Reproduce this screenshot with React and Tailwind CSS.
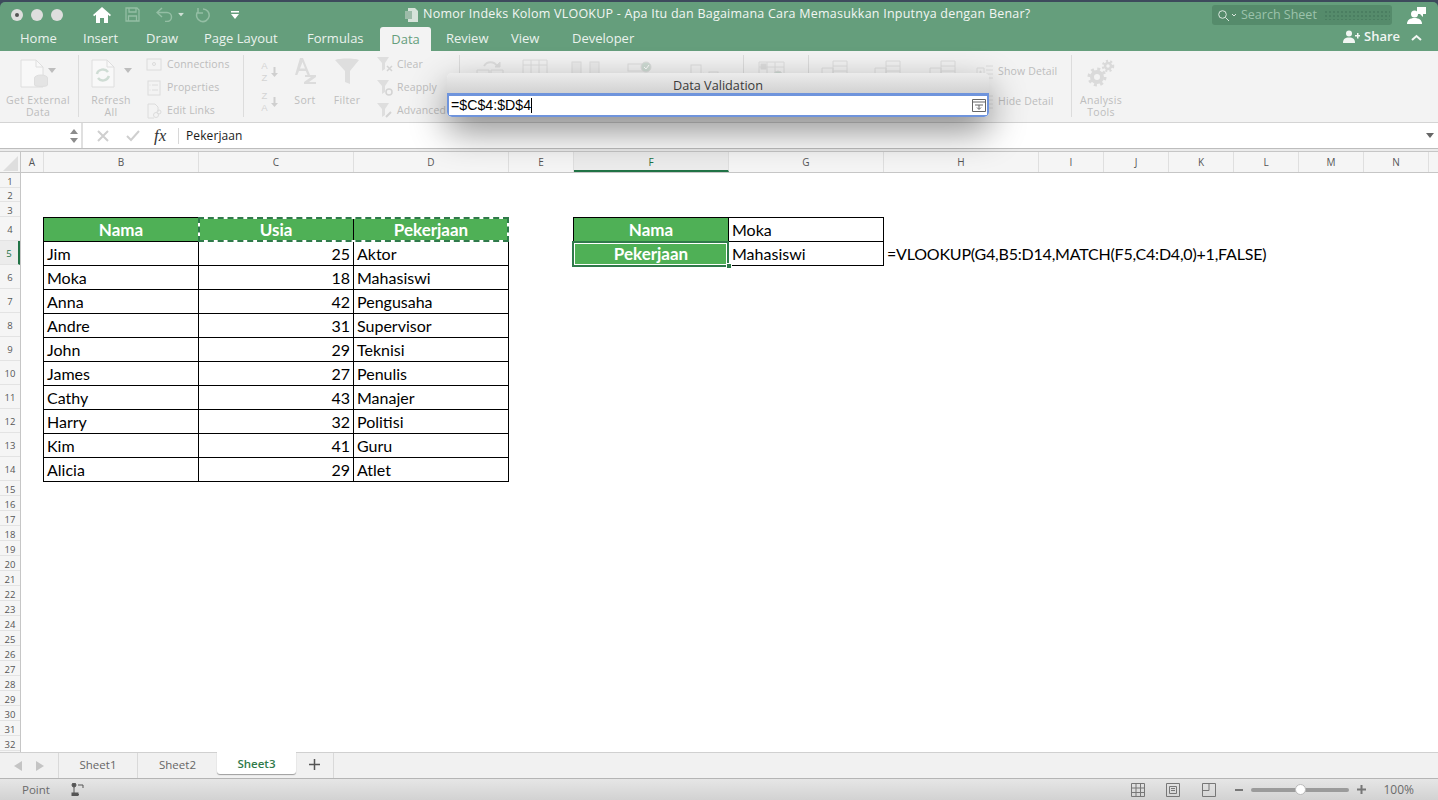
import React from 'react'

const uiFont = "font-['Open_Sans','Liberation_Sans',sans-serif]"
const cellFont = "font-['Lato','Open_Sans',sans-serif]"

const tabs = [
  { name: 'Home', w: 'w-[63px] pl-[20px]' },
  { name: 'Insert', w: 'w-[63px] pl-[20px]' },
  { name: 'Draw', w: 'w-[58px] pl-[20px]' },
  { name: 'Page Layout', w: 'w-[103px] pl-[20px]' },
  { name: 'Formulas', w: 'w-[93px] pl-[20px]' },
]

const columns = [
  { name: 'A', w: 'w-[23px]' },
  { name: 'B', w: 'w-[155px]' },
  { name: 'C', w: 'w-[155px]' },
  { name: 'D', w: 'w-[155px]' },
  { name: 'E', w: 'w-[65px]' },
  { name: 'F', w: 'w-[155px]', active: true },
  { name: 'G', w: 'w-[155px]' },
  { name: 'H', w: 'w-[155px]' },
  { name: 'I', w: 'w-[65px]' },
  { name: 'J', w: 'w-[65px]' },
  { name: 'K', w: 'w-[65px]' },
  { name: 'L', w: 'w-[65px]' },
  { name: 'M', w: 'w-[65px]' },
  { name: 'N', w: 'w-[65px]' },
]

const people = [
  ['Jim', 25, 'Aktor'],
  ['Moka', 18, 'Mahasiswi'],
  ['Anna', 42, 'Pengusaha'],
  ['Andre', 31, 'Supervisor'],
  ['John', 29, 'Teknisi'],
  ['James', 27, 'Penulis'],
  ['Cathy', 43, 'Manajer'],
  ['Harry', 32, 'Politisi'],
  ['Kim', 41, 'Guru'],
  ['Alicia', 29, 'Atlet'],
]

const rowNumbers = Array.from({ length: 32 }, (_, i) => i + 1)

function Caret({ className = '' }) {
  return (
    <svg width="8" height="5" viewBox="0 0 8 5" className={`shrink-0 ${className}`}>
      <path d="M0 0h8L4 5z" fill="currentColor" />
    </svg>
  )
}

function DocIcon({ children }) {
  return (
    <svg width="34" height="30" viewBox="0 0 34 30" fill="none" stroke="#dedede" strokeWidth="1">
      <path d="M1 1h15l7 7v20H1z" fill="#f8f8f8" />
      <path d="M16 1v7h7" />
      {children}
    </svg>
  )
}

function SmallIcon({ children }) {
  return (
    <svg width="16" height="16" viewBox="0 0 16 16" fill="none" stroke="#dcdcdc" strokeWidth="1" className="shrink-0">
      {children}
    </svg>
  )
}

function FunnelSmall({ mark }) {
  return (
    <svg width="17" height="17" viewBox="0 0 17 17" fill="#dedede" className="shrink-0">
      <path d="M1 1h12L9 7v6l-3 2V7z" />
      {mark}
    </svg>
  )
}

function SmallRow({ icon, label, gap = 'gap-[5px]' }) {
  return (
    <div className={`flex items-center h-[23px] ${gap}`}>
      {icon}
      <span className="text-[10.5px] tracking-[0.15px] text-[#bdbdbd] whitespace-nowrap">{label}</span>
    </div>
  )
}

function Separator({ ml = '', mr = '' }) {
  return <div className={`w-px h-[62px] bg-[#dcdcdc] shrink-0 ${ml} ${mr}`} />
}

function BigLabel({ children }) {
  return <div className="text-[10.5px] leading-[12px] tracking-[0.3px] text-[#bdbdbd] text-center whitespace-nowrap">{children}</div>
}

function SortStack({ top, bottom }) {
  return (
    <div className="flex items-center h-[24px]">
      <div className="w-[9px] flex flex-col items-center font-['Liberation_Sans',sans-serif] text-[9.500px] leading-[12px] text-[#d4d4d4]">
        <span>{top}</span>
        <span>{bottom}</span>
      </div>
      <svg width="7" height="10" viewBox="0 0 7 10" fill="#cfcfcf" className="ml-[2px]">
        <path d="M2.500 0h2v6H7l-3.500 4L0 6h2.500z" />
      </svg>
    </div>
  )
}

function GroupIcon() {
  return (
    <svg width="27" height="18" viewBox="0 0 27 18" fill="none" stroke="#dedede" className="shrink-0">
      <path d="M1 8h11v10H1zM12 1h14v17H12zM12 6h14M12 11h14" />
    </svg>
  )
}

function Ribbon() {
  return (
    <div className={`h-[71px] bg-[#f3f3f3] flex pt-[4px] overflow-hidden ${uiFont}`}>
      {/* Get External Data */}
      <div className="w-[64px] ml-[6px] shrink-0 flex flex-col items-center">
        <div className="flex items-start h-[39px] pt-[4px] text-[#bdbdbd]">
          <DocIcon>
            <ellipse cx="21" cy="19" rx="6.500" ry="3" fill="#e4e4e4" />
            <path d="M14.500 19v7c0 2 13 2 13 0v-7" fill="#e4e4e4" />
          </DocIcon>
          <Caret className="mt-[9px] -ml-[6px]" />
        </div>
        <BigLabel>Get External</BigLabel>
        <BigLabel>Data</BigLabel>
      </div>
      <Separator ml="ml-[8px]" mr="mr-[12px]" />
      {/* Refresh */}
      <div className="w-[40px] shrink-0 flex flex-col items-center">
        <div className="flex items-start h-[39px] pt-[4px] text-[#bdbdbd]">
          <DocIcon>
            <path d="M6 15c1-5 8-6 11-2M18 17c-2 5-8 6-11 2" stroke="#cfdcd4" strokeWidth="2.500" />
          </DocIcon>
          <Caret className="mt-[9px] -ml-[1px]" />
        </div>
        <BigLabel>Refresh</BigLabel>
        <BigLabel>All</BigLabel>
      </div>
      <div className="ml-[15px] w-[97px] shrink-0 flex flex-col -mt-[2px]">
        <SmallRow label="Connections" icon={<SmallIcon><rect x="1" y="2" width="14" height="11" /><circle cx="8" cy="7" r="1.500" /></SmallIcon>} />
        <SmallRow label="Properties" icon={<SmallIcon><rect x="2" y="1" width="12" height="14" /><path d="M6 5h6M6 10h6M3.500 5h1M3.500 10h1" /></SmallIcon>} />
        <SmallRow label="Edit Links" icon={<SmallIcon><path d="M2 1h7l3 3v5M2 1v14h6" /><circle cx="10" cy="12" r="2.500" /><circle cx="13" cy="9" r="2" /></SmallIcon>} />
      </div>
      <Separator mr="mr-[16px]" />
      {/* Sort and filter */}
      <div className="w-[18px] shrink-0 flex flex-col gap-[6px] pt-[5px]">
        <SortStack top="A" bottom="Z" />
        <SortStack top="Z" bottom="A" />
      </div>
      <div className="w-[24px] ml-[15px] shrink-0 flex flex-col items-center">
        <div className="h-[39px] pt-[2px]">
          <svg width="24" height="27" viewBox="0 0 24 27" fill="#dcdcdc">
            <path d="M7 1h3l7 17h-2.500l-1.700-4H6L4.300 18H2zM7 11.500h5L9.500 5z" />
            <path d="M12 18h11v2l-7 5h7v2H11v-2l7-5h-6z" />
          </svg>
        </div>
        <BigLabel>Sort</BigLabel>
      </div>
      <div className="w-[24px] ml-[18px] shrink-0 flex flex-col items-center">
        <div className="h-[39px] pt-[3px]">
          <svg width="24" height="27" viewBox="0 0 24 27" fill="#dedede">
            <path d="M0 2c4-2 20-2 24 0L15 13v13l-5-2V13z" />
          </svg>
        </div>
        <BigLabel>Filter</BigLabel>
      </div>
      <div className="ml-[17px] w-[83px] shrink-0 flex flex-col -mt-[2px]">
        <SmallRow gap="gap-[4px]" label="Clear" icon={<FunnelSmall mark={<path d="M11 10l5 5M16 10l-5 5" stroke="#d4d4d4" strokeWidth="1.500" />} />} />
        <SmallRow gap="gap-[4px]" label="Reapply" icon={<FunnelSmall mark={<circle cx="13" cy="13" r="3" fill="none" stroke="#d4d4d4" strokeWidth="1.500" />} />} />
        <SmallRow gap="gap-[4px]" label="Advanced" icon={<FunnelSmall mark={<path d="M10 15l5-5" stroke="#d4d4d4" strokeWidth="2" />} />} />
      </div>
      {/* Data tools, mostly under the dialog */}
      <Separator mr="mr-[16px]" />
      <div className="flex items-start shrink-0 pt-[4px] text-[#bdbdbd]">
        <svg width="31" height="18" viewBox="0 0 31 18" fill="none" stroke="#dedede" className="shrink-0">
          <path d="M8 7c3-5 10-5 13 0" strokeWidth="2" />
          <path d="M19 8l5 0 0-5z" fill="#dedede" />
          <path d="M1 11h12v7H1zM15 11h12v7H15z" />
        </svg>
        <svg width="29" height="18" viewBox="0 0 29 18" fill="none" stroke="#dedede" className="shrink-0 ml-[15px]">
          <path d="M1 1h24v16H1zM1 6h24M9 1v16M17 1v16" />
          <path d="M22 17l6-2v3h-6z" fill="#dedede" />
        </svg>
        <svg width="29" height="18" viewBox="0 0 29 18" fill="none" stroke="#dedede" className="shrink-0 ml-[20px]">
          <rect x="1" y="3" width="9" height="15" fill="#ececec" />
          <rect x="19" y="3" width="9" height="15" fill="#ececec" />
          <path d="M12 15l3 2-3 1z" fill="#cfdcd4" />
        </svg>
        <svg width="25" height="18" viewBox="0 0 25 18" fill="none" stroke="#dedede" className="shrink-0 ml-[27px]">
          <rect x="1" y="5" width="15" height="7" />
          <circle cx="19" cy="8" r="5" fill="#cfdcd4" />
          <path d="M17 8l2 2 3-4" stroke="#fff" />
        </svg>
        <Caret className="ml-[7px] mt-[15px]" />
        <svg width="29" height="18" viewBox="0 0 29 18" fill="none" stroke="#dedede" className="shrink-0 ml-[23px]">
          <rect x="1" y="6" width="10" height="12" />
          <rect x="19" y="13" width="9" height="5" />
          <path d="M13 14l3 2-3 2z" fill="#cfdcd4" />
        </svg>
      </div>
      <Separator ml="ml-[24px]" mr="mr-[14px]" />
      <div className="flex items-start shrink-0 pt-[4px] text-[#bdbdbd]">
        <svg width="27" height="18" viewBox="0 0 27 18" fill="none" stroke="#dedede" className="shrink-0">
          <path d="M1 3h25v12H1zM1 8h25M9 3v12M17 3v12" />
          <rect x="3" y="5" width="5" height="5" fill="#dedede" />
          <circle cx="20" cy="16" r="4" fill="#cfdcd4" />
        </svg>
        <Caret className="ml-[3px] mt-[15px]" />
      </div>
      <Separator ml="ml-[12px]" mr="mr-[12px]" />
      <div className="flex items-start shrink-0 pt-[5px] text-[#bdbdbd]">
        <GroupIcon />
        <Caret className="ml-[6px] mt-[14px]" />
        <div className="ml-[12px]"><GroupIcon /></div>
        <Caret className="ml-[6px] mt-[14px]" />
        <div className="ml-[14px]"><GroupIcon /></div>
      </div>
      <div className="w-[95px] shrink-0 ml-[20px] flex flex-col gap-[7px] pt-[5px]">
        <SmallRow gap="gap-[5px]" label="Show Detail" icon={<svg width="17" height="16" viewBox="0 0 17 16" fill="none" stroke="#dedede" className="shrink-0"><path d="M1 4h7v8H1zM3 8h3M4.500 6.500v3M10 2h7M10 6h7M10 10h7M10 14h7" /></svg>} />
        <SmallRow gap="gap-[5px]" label="Hide Detail" icon={<svg width="17" height="16" viewBox="0 0 17 16" fill="none" stroke="#dedede" className="shrink-0"><path d="M1 4h7v8H1zM3 8h3M10 2h7M10 6h7M10 10h7M10 14h7" /></svg>} />
      </div>
      <Separator />
      {/* Analysis tools */}
      <div className="w-[58px] shrink-0 flex flex-col items-center">
        <div className="h-[39px] pt-[4px]">
          <svg width="28" height="28" viewBox="0 0 28 28" fill="none" stroke="#dadada">
            <circle cx="10" cy="18" r="5" strokeWidth="4" />
            <circle cx="10" cy="18" r="8" strokeWidth="3" strokeDasharray="3 3.280" />
            <circle cx="21" cy="7" r="3" strokeWidth="2.500" />
            <circle cx="21" cy="7" r="5" strokeWidth="2.500" strokeDasharray="2 2.190" />
          </svg>
        </div>
        <BigLabel>Analysis</BigLabel>
        <BigLabel>Tools</BigLabel>
      </div>
    </div>
  )
}

function TitleBar() {
  return (
    <div className={`bg-[#659e7c] h-[49px] shrink-0 flex flex-col rounded-t-[5px] ${uiFont}`}>
      <div className="h-[25px] flex items-center relative">
        <div className="flex items-center gap-[8px] pl-[11px]">
          <div className="w-[12px] h-[12px] rounded-full bg-[#dedede] flex items-center justify-center">
            <div className="w-[4px] h-[4px] rounded-full bg-[#555]" />
          </div>
          <div className="w-[12px] h-[12px] rounded-full bg-[#dedede]" />
          <div className="w-[12px] h-[12px] rounded-full bg-[#dedede]" />
        </div>
        <svg width="18" height="16" viewBox="0 0 18 16" className="ml-[30px]">
          <path d="M9 0L0 8l1.200 1.300L3 7.700V16h4v-5h4v5h4V7.700l1.800 1.600L18 8z" fill="#fff" />
        </svg>
        <svg width="15" height="15" viewBox="0 0 15 15" fill="none" stroke="#94bea4" strokeWidth="1.300" className="ml-[14px]">
          <path d="M1 1h11l2 2v11H1zM4 1v4h7V1M3.500 14V9h8v5" />
        </svg>
        <svg width="17" height="15" viewBox="0 0 17 15" fill="none" stroke="#94bea4" strokeWidth="1.500" className="ml-[16px]">
          <path d="M6 1L1 5.500 6 10M1 5.500h10a4.500 4.500 0 0 1 0 9H9" />
        </svg>
        <Caret className="ml-[4px] text-[#cfe0d5] scale-75" />
        <svg width="16" height="16" viewBox="0 0 16 16" fill="none" stroke="#94bea4" strokeWidth="1.500" className="ml-[9px]">
          <path d="M9 2a6.300 6.300 0 1 1-5.600 3.200M4 1v5h5" />
        </svg>
        <svg width="8" height="8" viewBox="0 0 8 8" fill="#fff" className="ml-[21px]">
          <path d="M0 0h8v1.500H0zM0 3h8L4 8z" />
        </svg>
        <svg width="14" height="14" viewBox="0 0 14 14" className="ml-[166px]">
          <path d="M3 0h7l3 3v11H3z" fill="#d6e3da" />
          <rect x="0" y="3" width="7" height="8" fill="#9dbca9" />
        </svg>
        <span className="ml-[4px] text-[12.500px] tracking-[0.23px] text-[#f2f6f3] whitespace-nowrap">Nomor Indeks Kolom VLOOKUP - Apa Itu dan Bagaimana Cara Memasukkan Inputnya dengan Benar?</span>
        <div className="absolute left-[1212px] top-[3px] w-[180px] h-[20px] rounded-[3px] bg-[#558b6b] flex items-center pl-[6px] gap-[2px]">
          <svg width="11" height="11" viewBox="0 0 11 11" fill="none" stroke="#dce8e0" strokeWidth="1"><circle cx="4.500" cy="4.500" r="3.800" /><path d="M7.500 7.500L11 11" /></svg>
          <svg width="6" height="4" viewBox="0 0 6 4" fill="none" stroke="#dce8e0"><path d="M1 1l2 2 2-2" /></svg>
          <span className="ml-[2px] text-[12.500px] text-[#9cc3ab]">Search Sheet</span>
          <div className="ml-[5px] mr-[2px] flex-1 h-[10px] bg-[radial-gradient(#4a7d60_0.7px,transparent_0.8px)] bg-[length:4px_4px]" />
        </div>
        <svg width="19" height="19" viewBox="0 0 19 19" fill="#fff" className="absolute left-[1407px] top-[4px]">
          <path d="M10 1h9v7h-3v3l-3-3h-3z" />
          <circle cx="7.500" cy="8" r="3.500" />
          <path d="M0 18c0-4 3-6 7.500-6s7.500 2 7.500 6z" />
        </svg>
      </div>
      <div className="flex h-[24px] relative">
        {tabs.map((t) => (
          <div key={t.name} className={`${t.w} text-[13px] leading-[22px] font-medium text-[#eaf2ed] whitespace-nowrap`}>{t.name}</div>
        ))}
        <div className="w-[51px] h-[24px] bg-[#f3f3f3] rounded-t-[3px] text-center text-[13px] leading-[24px] font-medium text-[#659e7c]">Data</div>
        <div className="w-[65px] pl-[15px] text-[13px] leading-[22px] font-medium text-[#eaf2ed]">Review</div>
        <div className="w-[52px] pl-[15px] text-[13px] leading-[22px] font-medium text-[#eaf2ed]">View</div>
        <div className="pl-[24px] text-[13px] leading-[22px] font-medium text-[#eaf2ed]">Developer</div>
        <div className="absolute left-[1343px] top-0 flex items-center text-white">
          <svg width="17" height="13" viewBox="0 0 17 13" fill="#f2f6f3">
            <circle cx="6" cy="3.500" r="3" />
            <path d="M0 13c0-4 2-5.500 6-5.500S12 9 12 13zM12 5h2V3h1.500v2H17v1.500h-1.500v2H14v-2h-2z" />
          </svg>
          <span className="ml-[4px] text-[13px] font-semibold text-[#f2f6f3]">Share</span>
          <svg width="11" height="7" viewBox="0 0 11 7" fill="none" stroke="#f2f6f3" strokeWidth="2" className="ml-[11px] mt-[1px]"><path d="M1 6l4.500-4L10 6" /></svg>
        </div>
      </div>
    </div>
  )
}

function FormulaBar() {
  return (
    <div className={`h-[27px] bg-white border-t border-[#d4d4d4] border-b border-b-[#bdbdbd] flex items-center ${uiFont}`}>
      <div className="w-[83px] h-full border-r-2 border-[#e0e0e0] flex flex-col items-end justify-center gap-[4px] pr-[3px] text-[#8c8c8c]">
        <Caret className="rotate-180" />
        <Caret />
      </div>
      <svg width="12" height="12" viewBox="0 0 12 12" stroke="#cfcfcf" strokeWidth="2" className="ml-[14px]"><path d="M1 1l10 10M11 1L1 11" /></svg>
      <svg width="14" height="12" viewBox="0 0 14 12" fill="none" stroke="#cfcfcf" strokeWidth="2" className="ml-[17px]"><path d="M1 6l4 4 8-9" /></svg>
      <span className="ml-[14px] w-[24px] font-['Liberation_Serif',serif] italic text-[17px] text-[#333]">fx</span>
      <div className="w-px h-[16px] bg-[#d8d8d8]" />
      <span className="ml-[7px] text-[12px] tracking-[0.1px] text-[#1a1a1a]">Pekerjaan</span>
      <Caret className="ml-auto mr-[4px] text-[#666]" />
    </div>
  )
}

function ColumnHeader() {
  return (
    <div className={`h-[21px] flex bg-[#f5f5f5] border-b border-[#c6c6c6] text-[10px] leading-[20px] text-[#555] ${uiFont}`}>
      <div className="w-[21px] shrink-0 border-r border-[#c6c6c6] relative overflow-hidden">
        <svg width="20" height="20" viewBox="0 0 20 20" className="absolute left-0 top-0"><path d="M18 4v15H3z" fill="#dedede" /></svg>
      </div>
      {columns.map((c) => (
        <div
          key={c.name}
          className={`${c.w} shrink-0 text-center border-r border-[#dfdfdf] ${c.active ? 'bg-[#ececec] border-b-2 border-b-[#217346] text-[#217346]' : ''}`}
        >
          {c.name}
        </div>
      ))}
      <div className="flex-1" />
    </div>
  )
}

function RowHeaders() {
  return (
    <div className={`w-[21px] shrink-0 bg-[#f5f5f5] border-r border-[#c6c6c6] text-[9.500px] text-[#555] ${uiFont}`}>
      {rowNumbers.map((n) => {
        const tall = n >= 4 && n <= 14
        const active = n === 5
        return (
          <div
            key={n}
            className={`flex items-center justify-center pt-[4px] border-b border-[#e3e3e3] ${tall ? 'h-[24px]' : n <= 3 ? 'h-[14.670px]' : 'h-[15px]'} ${active ? 'bg-[#ececec] text-[#217346] border-r-2 border-r-[#217346]' : ''}`}
          >
            {n}
          </div>
        )
      })}
    </div>
  )
}

function Cell({ w, children, className = '' }) {
  return (
    <div className={`${w} h-[24px] shrink-0 border-black border-r border-b px-[3px] leading-[24px] whitespace-nowrap ${className}`}>
      {children}
    </div>
  )
}

const headCell = 'bg-[#4fb056] font-bold text-white text-center text-[17px]'

function Sheet() {
  return (
    <div className={`flex-1 bg-white overflow-hidden flex min-h-0 ${cellFont} text-[16px] text-black`}>
      <RowHeaders />
      <div className="pt-[44px] pl-[22px] flex-1">
        <div className="flex items-start">
          {/* Left table */}
          <div className="w-[466px] shrink-0 border-l border-t border-black">
            <div className="flex relative">
              <Cell w="w-[155px]" className={headCell}>Nama</Cell>
              <Cell w="w-[155px]" className={headCell}>Usia</Cell>
              <Cell w="w-[155px]" className={headCell}>Pekerjaan</Cell>
              <div className="absolute left-[154px] -top-px w-[311px] h-[25px] border-2 border-white" />
              <div className="absolute left-[154px] -top-px w-[311px] h-[25px] border-2 border-dashed border-[#2f7a4a]" />
            </div>
            {people.map((p) => (
              <div key={p[0]} className="flex">
                <Cell w="w-[155px]">{p[0]}</Cell>
                <Cell w="w-[155px]" className="text-right">{p[1]}</Cell>
                <Cell w="w-[155px]">{p[2]}</Cell>
              </div>
            ))}
          </div>
          {/* Lookup table */}
          <div className="ml-[64px] w-[311px] shrink-0 border-l border-t border-black">
            <div className="flex">
              <Cell w="w-[155px]" className={headCell}>Nama</Cell>
              <Cell w="w-[155px]">Moka</Cell>
            </div>
            <div className="flex relative">
              <Cell w="w-[155px]" className={headCell}>Pekerjaan</Cell>
              <Cell w="w-[155px]">Mahasiswi</Cell>
              <span className="pl-[3px] leading-[24px] whitespace-nowrap tracking-[-0.2px]">=VLOOKUP(G4,B5:D14,MATCH(F5,C4:D4,0)+1,FALSE)</span>
              <div className="absolute -left-[2px] -top-px w-[157px] h-[26px] border-2 border-[#2f7a4a]">
                <div className="w-full h-full border border-white" />
              </div>
              <div className="absolute left-[152px] top-[21px] w-[6px] h-[6px] bg-[#2f7a4a] border border-white" />
            </div>
          </div>
        </div>
      </div>
    </div>
  )
}

function SheetTabs() {
  return (
    <div className={`h-[26px] shrink-0 bg-[#f1f1f1] border-t border-[#d0d0d0] flex ${uiFont} text-[11.500px] text-[#666]`}>
      <div className="w-[59px] flex items-center justify-center gap-[14px] border-r border-[#d9d9d9] text-[#c4c4c4]">
        <svg width="8" height="10" viewBox="0 0 8 10" fill="currentColor"><path d="M8 0v10L0 5z" /></svg>
        <svg width="8" height="10" viewBox="0 0 8 10" fill="currentColor"><path d="M0 0v10l8-5z" /></svg>
      </div>
      <div className="w-[79px] text-center leading-[24px] border-r border-[#d9d9d9]">Sheet1</div>
      <div className="w-[79px] text-center leading-[24px]">Sheet2</div>
      <div className="w-[79px] h-[22px] -mt-px bg-white rounded-b-[3px] shadow-[0_1px_1px_rgba(0,0,0,0.35)] text-center leading-[24px] font-semibold text-[#2f7a4a]">Sheet3</div>
      <div className="w-[38px] flex items-center justify-center border-r border-[#d9d9d9] pb-[2px]">
        <svg width="11" height="11" viewBox="0 0 11 11" stroke="#555" strokeWidth="1.500"><path d="M5.500 0v11M0 5.500h11" /></svg>
      </div>
    </div>
  )
}

function StatusBar() {
  return (
    <div className={`h-[22px] shrink-0 border-t border-[#b5b5b5] bg-linear-to-b from-[#e6e6e6] to-[#d2d2d2] flex items-center ${uiFont} text-[11.500px] text-[#6b6b6b]`}>
      <span className="ml-[22px]">Point</span>
      <svg width="14" height="13" viewBox="0 0 14 13" fill="none" stroke="#555" className="ml-[21px]">
        <circle cx="3" cy="2" r="2" fill="#555" />
        <path d="M3 4v6M7 2h5v3M1 11.500h7" />
        <rect x="1" y="10" width="6" height="3" fill="#555" />
      </svg>
      <svg width="14" height="14" viewBox="0 0 14 14" fill="none" stroke="#777" className="ml-auto">
        <path d="M.5.5h13v13H.5zM.5 5h13M.5 9.500h13M5 .5v13M9.500 .5v13" />
      </svg>
      <svg width="14" height="14" viewBox="0 0 14 14" fill="none" stroke="#777" className="ml-[21px]">
        <path d="M.5.5h13v13H.5zM3.500 3.500h7v7h-7zM5 5.500h4M5 7.500h4" />
      </svg>
      <svg width="14" height="14" viewBox="0 0 14 14" fill="none" stroke="#777" className="ml-[22px]">
        <path d="M.5.5h13v13H.5zM7 .5v7H.5" />
      </svg>
      <div className="w-[8px] h-[2px] bg-[#777] ml-[19px]" />
      <div className="w-[98px] h-[4px] rounded-full bg-[#9b9b9b] ml-[8px] flex items-center relative">
        <div className="absolute left-[44px] -top-[3.500px] w-[11px] h-[11px] rounded-full bg-white border border-[#bbb]" />
      </div>
      <svg width="9" height="9" viewBox="0 0 9 9" stroke="#777" strokeWidth="2" className="ml-[8px]"><path d="M4.500 0v9M0 4.500h9" /></svg>
      <span className="ml-[17px] mr-[24px] text-[12px]">100%</span>
    </div>
  )
}

function DataValidationDialog() {
  return (
    <div className={`absolute left-[447px] top-[73px] w-[542px] h-[44px] rounded-[5px] overflow-hidden shadow-[0_14px_36px_rgba(0,0,0,0.45)] ${uiFont}`}>
      <div className="h-[20px] bg-linear-to-b from-[#ececec] to-[#d2d2d2] text-center text-[12.700px] leading-[24px] text-[#3a3a3a]">Data Validation</div>
      <div className="h-[24px] bg-white border-2 border-[#6f94dc] border-t-[3px] flex items-center">
        <span className="ml-[2px] font-['Liberation_Sans',sans-serif] text-[14.200px] text-black">=$C$4:$D$4</span>
        <div className="w-px h-[15px] bg-black" />
        <svg width="14" height="13" viewBox="0 0 14 13" fill="none" stroke="#666" className="ml-auto mr-[1px]">
          <path d="M.5.5h13v12H.5zM.5 3h13M3 6h8M7 6v4M5 8.500l2 2 2-2" />
        </svg>
      </div>
    </div>
  )
}

export default function App() {
  return (
    <div className="w-[1438px] h-[800px] overflow-hidden flex flex-col relative bg-[#3d4a5c] pt-[2px]">
      <TitleBar />
      <Ribbon />
      <FormulaBar />
      <div className="h-[3px] shrink-0 bg-[#ececec] border-b border-[#c6c6c6]" />
      <ColumnHeader />
      <Sheet />
      <SheetTabs />
      <StatusBar />
      <DataValidationDialog />
    </div>
  )
}
